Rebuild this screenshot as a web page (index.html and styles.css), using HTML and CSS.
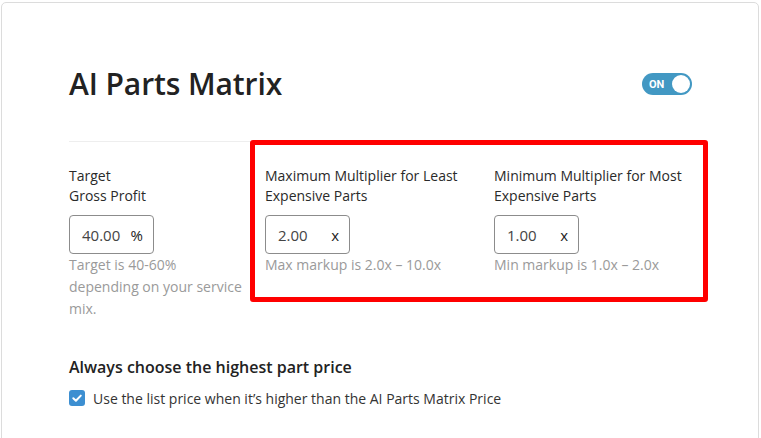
FILE: index.html
```html
<!DOCTYPE html>
<html lang="en">
<head>
<meta charset="utf-8">
<title>AI Parts Matrix</title>
<link rel="stylesheet" href="styles.css">
</head>
<body>
<div class="card">
  <div class="header">
    <h1 class="title">AI Parts Matrix</h1>
    <div class="toggle"><span class="toggle-label">ON</span><span class="knob"></span></div>
  </div>
  <div class="fields">
    <div class="field field-left">
      <div class="label">Target<br>Gross Profit</div>
      <div class="input"><span class="value">40.00</span><span class="unit">%</span></div>
      <div class="help">Target is 40-60% depending on your service mix.</div>
    </div>
    <div class="highlight">
      <div class="field">
        <div class="label">Maximum Multiplier for Least Expensive Parts</div>
        <div class="input"><span class="value">2.00</span><span class="unit">x</span></div>
        <div class="help">Max markup is 2.0x – 10.0x</div>
      </div>
      <div class="field">
        <div class="label">Minimum Multiplier for Most Expensive Parts</div>
        <div class="input"><span class="value">1.00</span><span class="unit">x</span></div>
        <div class="help">Min markup is 1.0x – 2.0x</div>
      </div>
    </div>
  </div>
  <h2 class="subtitle">Always choose the highest part price</h2>
  <label class="check-row">
    <span class="checkbox"><svg width="12" height="12" viewBox="0 0 12 12"><path d="M2.3 6.2 L4.9 8.7 L9.8 3.6" fill="none" stroke="#fff" stroke-width="2" stroke-linecap="round" stroke-linejoin="round"/></svg></span>
    <span class="check-label">Use the list price when it’s higher than the AI Parts Matrix Price</span>
  </label>
</div>
</body>
</html>
```
FILE: styles.css
```css
* { box-sizing: border-box; }
html, body { margin: 0; padding: 0; background: #fff; }
body {
  font-family: "Open Sans", "Noto Sans", sans-serif;
  color: #333;
  width: 761px;
  height: 438px;
  overflow: hidden;
}
.card {
  margin: 2px 2px 0 1px;
  height: 450px;
  border: 1px solid #dcdcdc;
  border-radius: 5px;
  padding: 56px 66px 0 67px;
}
.header {
  display: flex;
  align-items: center;
  justify-content: space-between;
  height: 48px;
  margin-bottom: 34px;
}
.title {
  margin: 0;
  font-size: 30px;
  font-weight: 600;
  color: #222;
  letter-spacing: -0.1px;
}
.toggle {
  width: 50px;
  height: 22px;
  border-radius: 11px;
  background: #4298c3;
  display: flex;
  align-items: center;
  justify-content: space-between;
  padding: 0 2px 0 7px;
  margin-top: 2px;
}
.toggle-label {
  color: #fff;
  font-size: 11px;
  font-weight: 700;
  font-family: "Roboto", sans-serif;
}
.knob {
  width: 18px;
  height: 18px;
  border-radius: 50%;
  background: #fff;
}
.fields {
  display: flex;
  width: 639px;
  border-top: 1px solid #eeeeee;
}
.field-left {
  flex: 0 0 181px;
  padding-top: 24px;
}
.highlight {
  flex: 0 0 458px;
  margin-top: -2px;
  height: 162px;
  border: 5px solid #ff0000;
  border-radius: 3px;
  padding: 21px 10px 0 10px;
  display: grid;
  grid-template-columns: 229px 1fr;
}
.label {
  font-size: 14px;
  line-height: 20px;
  color: #2a2a2a;
}
.input {
  margin-top: 9px;
  width: 85px;
  height: 39px;
  border: 1px solid #8c8c8c;
  border-radius: 4px;
  display: flex;
  align-items: center;
  padding: 0 10px 0 12px;
  justify-content: space-between;
  font-size: 15px;
  color: #333;
}
.value { color: #444; }
.unit { color: #222; }
.help {
  font-size: 14px;
  line-height: 22px;
  color: #9a9a9a;
}
.field-left .help { width: 175px; }
.subtitle {
  margin: 36px 0 0 0;
  font-size: 16px;
  line-height: 22px;
  font-weight: 600;
  color: #222;
}
.check-row {
  display: flex;
  align-items: center;
  margin-top: 9px;
  height: 22px;
}
.checkbox {
  width: 16px;
  height: 16px;
  border-radius: 3px;
  background: #3d8fd1;
  display: flex;
  align-items: center;
  justify-content: center;
  margin-right: 8px;
}
.check-label {
  font-size: 14px;
  color: #333;
}
```
